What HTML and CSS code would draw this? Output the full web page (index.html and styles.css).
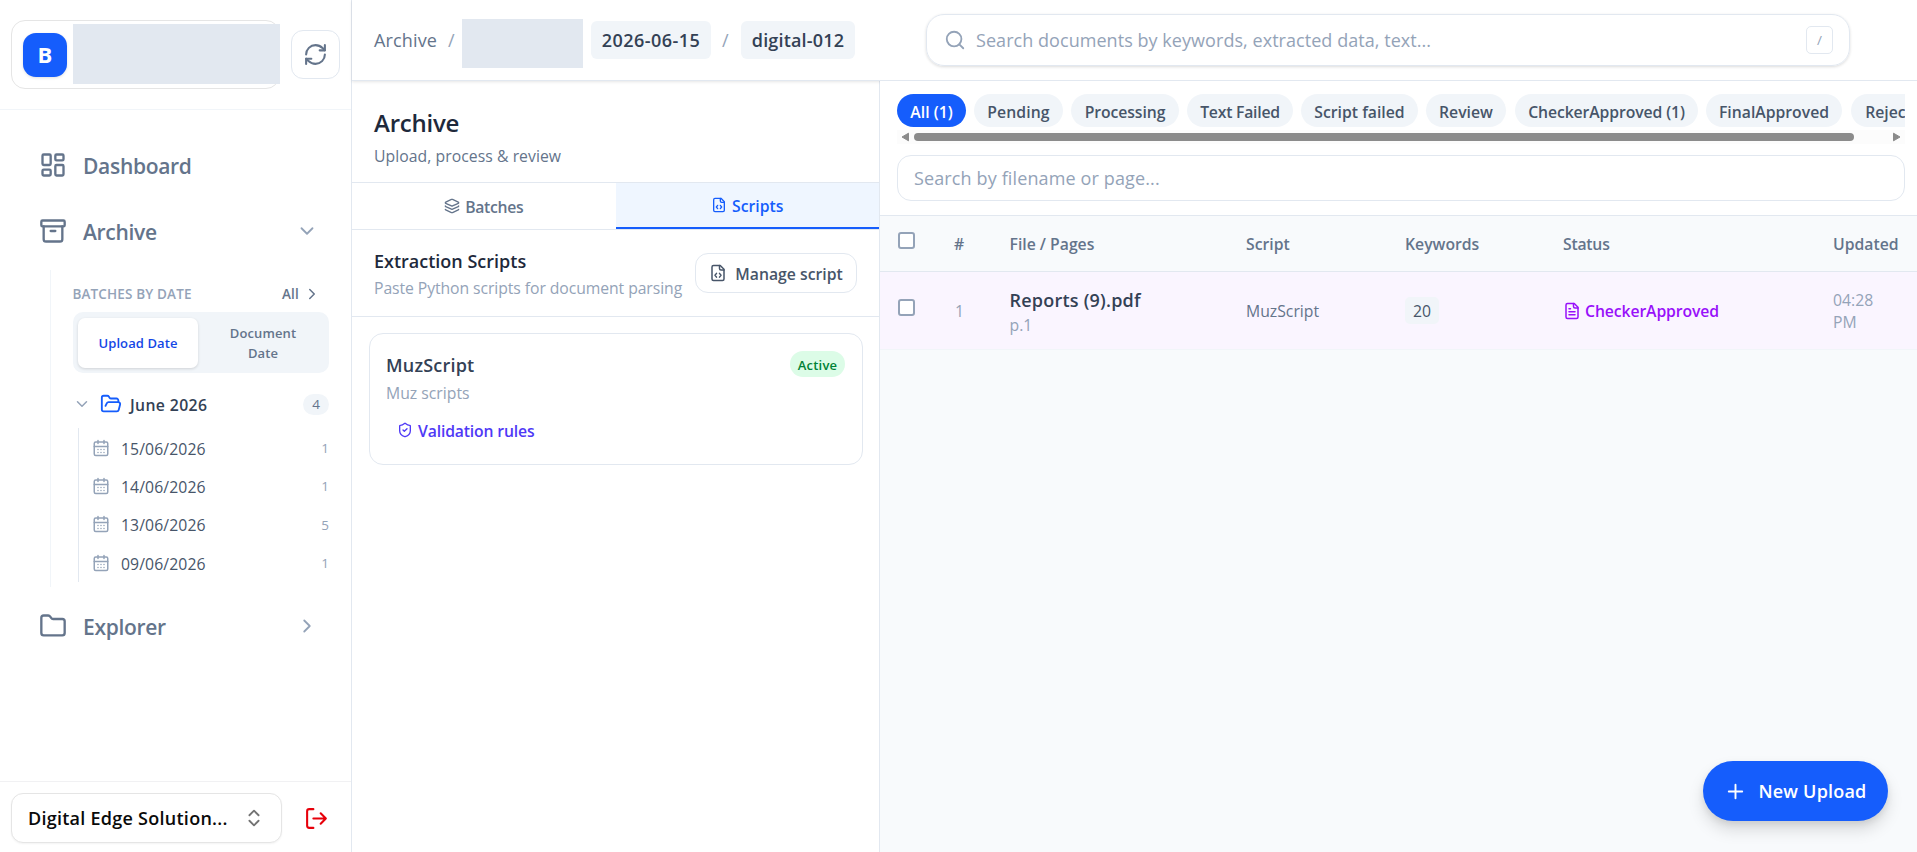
FILE: index.html
```html
<!DOCTYPE html>
<html lang="en">
<head>
<meta charset="utf-8">
<title>Archive</title>
<link rel="stylesheet" href="styles.css">
</head>
<body>
<svg class="defs" aria-hidden="true">
  <symbol id="down" viewBox="0 0 24 24"><path d="m6 9 6 6 6-6"/></symbol>
  <symbol id="right" viewBox="0 0 24 24"><path d="m9 18 6-6-6-6"/></symbol>
  <symbol id="cal" viewBox="0 0 24 24"><path d="M8 2v4M16 2v4"/><rect width="18" height="18" x="3" y="4" rx="2"/><path d="M3 10h18M8 14h.01M12 14h.01M16 14h.01M8 18h.01M12 18h.01M16 18h.01"/></symbol>
  <symbol id="code" viewBox="0 0 24 24"><path d="M15 2H6a2 2 0 0 0-2 2v16a2 2 0 0 0 2 2h12a2 2 0 0 0 2-2V7Z"/><path d="M14 2v4a2 2 0 0 0 2 2h4"/><path d="m10 12.5-2 2.5 2 2.5M14 12.5l2 2.5-2 2.5"/></symbol>
</svg>
<div class="app">
  <aside class="sidebar">
    <div class="brand-bar">
      <div class="brand"><span class="logo">B</span><span class="brand-mask"></span></div>
      <button class="refresh"><svg class="i i25" viewBox="0 0 24 24"><path d="M3 12a9 9 0 0 1 9-9 9.75 9.75 0 0 1 6.74 2.74L21 8"/><path d="M21 3v5h-5"/><path d="M21 12a9 9 0 0 1-9 9 9.75 9.75 0 0 1-6.74-2.74L3 16"/><path d="M8 16H3v5"/></svg></button>
    </div>
    <nav class="nav">
      <a class="nav-item"><svg class="i i28" viewBox="0 0 24 24"><rect width="7" height="9" x="3" y="3" rx="1"/><rect width="7" height="5" x="14" y="3" rx="1"/><rect width="7" height="9" x="14" y="12" rx="1"/><rect width="7" height="5" x="3" y="16" rx="1"/></svg><span class="t t-nav">Dashboard</span></a>
      <a class="nav-item"><svg class="i i28" viewBox="0 0 24 24"><rect width="20" height="5" x="2" y="3" rx="1"/><path d="M4 8v11a2 2 0 0 0 2 2h12a2 2 0 0 0 2-2V8"/><path d="M10 12h4"/></svg><span class="t t-nav">Archive</span><svg class="i i22 caret"><use href="#down"/></svg></a>
      <div class="sub">
        <div class="sub-head"><span class="t t-cap">BATCHES BY DATE</span><span class="all"><span class="t t-all">All</span><svg class="i i18"><use href="#right"/></svg></span></div>
        <div class="toggle"><span class="tg on"><span class="t">Upload Date</span></span><span class="tg"><span class="t">Document</span><span class="t">Date</span></span></div>
        <div class="month"><svg class="i i18 faint"><use href="#down"/></svg><svg class="i i22 folder" viewBox="0 0 24 24"><path d="m6 14 1.5-2.9A2 2 0 0 1 9.24 10H20a2 2 0 0 1 1.94 2.5l-1.54 6a2 2 0 0 1-1.95 1.5H4a2 2 0 0 1-2-2V5a2 2 0 0 1 2-2h3.9a2 2 0 0 1 1.69.9l.81 1.2a2 2 0 0 0 1.67.9H18a2 2 0 0 1 2 2v2"/></svg><span class="t t-month">June 2026</span><span class="count">4</span></div>
        <div class="days">
          <div class="day"><svg class="i i18"><use href="#cal"/></svg><span class="t t-day">15/06/2026</span><b>1</b></div>
          <div class="day"><svg class="i i18"><use href="#cal"/></svg><span class="t t-day">14/06/2026</span><b>1</b></div>
          <div class="day"><svg class="i i18"><use href="#cal"/></svg><span class="t t-day">13/06/2026</span><b>5</b></div>
          <div class="day"><svg class="i i18"><use href="#cal"/></svg><span class="t t-day">09/06/2026</span><b>1</b></div>
        </div>
      </div>
      <a class="nav-item"><svg class="i i28" viewBox="0 0 24 24"><path d="M20 20a2 2 0 0 0 2-2V8a2 2 0 0 0-2-2h-7.9a2 2 0 0 1-1.69-.9L9.6 3.9A2 2 0 0 0 7.93 3H4a2 2 0 0 0-2 2v13a2 2 0 0 0 2 2Z"/></svg><span class="t t-nav">Explorer</span><svg class="i i22 caret"><use href="#right"/></svg></a>
    </nav>
    <div class="account">
      <button class="org"><span class="t t-org">Digital Edge Solution...</span><svg class="i i22" viewBox="0 0 24 24"><path d="m7 15 5 5 5-5M7 9l5-5 5 5"/></svg></button>
      <svg class="i i25 logout" viewBox="0 0 24 24"><path d="m16 17 5-5-5-5M21 12H9M9 21H5a2 2 0 0 1-2-2V5a2 2 0 0 1 2-2h4"/></svg>
    </div>
  </aside>
  <div class="main">
    <header class="topbar">
      <div class="crumbs"><span class="t t-crumb">Archive</span><i>/</i><span class="crumb-mask"></span><span class="chip c1"><span class="t">2026-06-15</span></span><i>/</i><span class="chip c2"><span class="t">digital-012</span></span></div>
      <div class="search"><svg class="i i22" viewBox="0 0 24 24"><circle cx="11" cy="11" r="8"/><path d="m21 21-4.3-4.3"/></svg><span class="t">Search documents by keywords, extracted data, text...</span><kbd>/</kbd></div>
    </header>
    <div class="content">
      <section class="panel">
        <div class="panel-head"><h1 class="t-h1">Archive</h1><p class="t-sub">Upload, process &amp; review</p></div>
        <div class="tabs">
          <a class="tab"><svg class="i i16" viewBox="0 0 24 24"><path d="M12.83 2.18a2 2 0 0 0-1.66 0L2.6 6.08a1 1 0 0 0 0 1.83l8.58 3.91a2 2 0 0 0 1.66 0l8.58-3.9a1 1 0 0 0 0-1.83z"/><path d="M2 12a1 1 0 0 0 .58.91l8.6 3.91a2 2 0 0 0 1.65 0l8.58-3.9A1 1 0 0 0 22 12M2 17a1 1 0 0 0 .58.91l8.6 3.91a2 2 0 0 0 1.65 0l8.58-3.9A1 1 0 0 0 22 17"/></svg><span class="t t-tab">Batches</span></a>
          <a class="tab active"><svg class="i i16"><use href="#code"/></svg><span class="t">Scripts</span></a>
        </div>
        <div class="scripts-head"><div class="sh"><h2 class="t-h2">Extraction Scripts</h2><p class="t-p">Paste Python scripts for document parsing</p></div><button class="manage"><svg class="i i18"><use href="#code"/></svg><span class="t">Manage script</span></button></div>
        <article class="card">
          <div class="card-top"><h3 class="t-h3">MuzScript</h3><span class="active-badge">Active</span></div>
          <p class="t-p2">Muz scripts</p>
          <a class="rules"><svg class="i i16" viewBox="0 0 24 24"><path d="M20 13c0 5-3.5 7.5-7.66 8.95a1 1 0 0 1-.67-.01C7.5 20.5 4 18 4 13V6a1 1 0 0 1 1-1c2 0 4.5-1.2 6.24-2.72a1.17 1.17 0 0 1 1.52 0C14.51 3.81 17 5 19 5a1 1 0 0 1 1 1z"/><path d="m9 12 2 2 4-4"/></svg><span class="t t-rules">Validation rules</span></a>
        </article>
      </section>
      <section class="files">
        <div class="filters">
          <div class="pills">
            <span class="pill p1">All (1)</span><span class="pill p2">Pending</span><span class="pill p3">Processing</span><span class="pill p4">Text Failed</span><span class="pill p5">Script failed</span><span class="pill p6">Review</span><span class="pill p7">CheckerApproved (1)</span><span class="pill p8">FinalApproved</span><span class="pill p9">Rejected</span>
          </div>
          <div class="scroll"><svg viewBox="0 0 8 10"><path d="M7.5 1.2v7.6L1 5z"/></svg><span class="thumb"></span><svg viewBox="0 0 8 10"><path d="M.5 1.2v7.6L7 5z"/></svg></div>
          <div class="file-search">Search by filename or page...</div>
        </div>
        <div class="row head"><span class="box"></span><span class="t">#</span><span class="t">File / Pages</span><span class="t">Script</span><span class="t">Keywords</span><span class="t t-sth">Status</span><span class="t">Updated</span></div>
        <div class="row item"><span class="box"></span><span class="num">1</span><span class="file"><span class="t t-file">Reports (9).pdf</span><span class="page">p.1</span></span><span class="t t-cell">MuzScript</span><span><span class="kw">20</span></span><span class="status"><svg class="i i18" viewBox="0 0 24 24"><path d="M15 2H6a2 2 0 0 0-2 2v16a2 2 0 0 0 2 2h12a2 2 0 0 0 2-2V7Z"/><path d="M14 2v4a2 2 0 0 0 2 2h4M10 9H8M16 13H8M16 17H8"/></svg><span class="t">CheckerApproved</span></span><span class="time"><span>04:28</span><span>PM</span></span></div>
        <button class="upload"><svg class="i i23" viewBox="0 0 24 24"><path d="M5 12h14M12 5v14"/></svg><span class="t">New Upload</span></button>
      </section>
    </div>
  </div>
</div>
</body>
</html>
```

FILE: styles.css
```css
* { box-sizing: border-box; }
body { margin: 0; font-family: "Open Sans", "Noto Sans", sans-serif; font-size: 15.75px; color: #334155; background: #fff; overflow: hidden; }
h1, h2, h3, p { margin: 0; font-weight: inherit; font-size: inherit; }
button { font: inherit; background: #fff; padding: 0; border: 0; }
.defs { display: none; }
.t { white-space: nowrap; display: inline-block; }
.i { fill: none; stroke: currentColor; stroke-width: 2; stroke-linecap: round; stroke-linejoin: round; flex: none; display: block; }
.i16 { width: 16px; height: 16px; }
.i18 { width: 18px; height: 18px; }
.i22 { width: 22px; height: 22px; }
.i23 { width: 23px; height: 23px; }
.i25 { width: 25px; height: 25px; }
.i28 { width: 28px; height: 28px; }

.app { display: flex; height: 852px; width: 1917px; }

/* Sidebar */
.sidebar { width: 352px; flex: none; border-right: 1px solid #e2e8f0; display: flex; flex-direction: column; }
.brand-bar { height: 110px; border-bottom: 1px solid #f1f5f9; padding: 20px 11px 0; display: flex; gap: 11px; align-items: flex-start; }
.brand { width: 269px; height: 69px; border: 1px solid #e5e5e5; border-radius: 14px; padding: 3px 0 0 11px; display: flex; gap: 6px; flex: none; }
.logo { width: 44px; height: 44px; margin-top: 9px; border-radius: 13px; background: #155dfc; color: #fff; font-weight: 700; font-size: 22px; line-height: 43px; text-align: center; box-shadow: 0 1px 3px rgba(0,0,0,.12); flex: none; }
.brand-mask { width: 207px; height: 60px; background: #e2e8f0; flex: none; }
.refresh { width: 49px; height: 49px; margin-top: 10px; border: 1px solid #e2e8f0; border-radius: 12px; color: #64748b; display: grid; place-items: center; flex: none; }
.nav { flex: 1; padding-top: 22px; color: #64748b; }
.nav-item { height: 66px; display: flex; align-items: center; padding: 0 33px 0 39px; gap: 16px; }
.nav-item > .i:first-child { margin-top: -1px; }
.t-nav { font-size: 21px; font-weight: 600; letter-spacing: -.3px; padding-top: 1px; }
.caret { margin-left: auto; color: #94a3b8; }
.sub { height: 317px; margin: 6px 22px 6px 50px; border-left: 1px solid #f1f5f9; padding: 14px 0 0 22px; }
.sub-head { height: 20px; display: flex; align-items: center; justify-content: space-between; }
.t-cap { font-size: 13.5px; font-weight: 600; color: #94a3b8; letter-spacing: .14px; margin-left: -.5px; }
.all { display: flex; align-items: center; gap: 4px; margin-right: 8px; font-size: 13.5px; font-weight: 600; letter-spacing: .2px; }
.toggle { margin-top: 8px; height: 61px; width: 256px; background: #f1f5f9; border-radius: 10px; padding: 6px 5px 5px; display: flex; gap: 5px; }
.tg { width: 120px; height: 50px; display: flex; flex-direction: column; align-items: center; justify-content: center; font-size: 13px; line-height: 20px; font-weight: 600; letter-spacing: .1px; }
.tg.on { background: #fff; color: #1447e6; border-radius: 7px; box-shadow: 0 1px 3px rgba(0,0,0,.14); }
.month { height: 42px; margin-top: 10px; width: 256px; display: flex; align-items: center; }
.faint { color: #94a3b8; }
.folder { color: #155dfc; margin-left: 9px; }
.t-month { margin-left: 8px; padding-top: 1px; font-weight: 600; color: #334155; letter-spacing: .38px; }
.count { margin-left: auto; width: 26px; height: 21px; border-radius: 11px; background: #f1f5f9; font-size: 13.5px; line-height: 21px; text-align: center; }
.days { margin: 3px 0 0 5px; width: 251px; height: 154px; border-left: 1px solid #e2e8f0; padding: 1px 0 0 14px; }
.day { height: 38.3px; display: flex; align-items: center; color: #475569; }
.t-day { letter-spacing: .1px; padding-top: 1px; }
.day .i { color: #94a3b8; margin: -1px 10px 0 -1px; }
.day .t-day { margin-left: 1px; }
.day b { margin-left: auto; font-weight: 400; font-size: 13.5px; color: #94a3b8; }
.account { height: 71px; border-top: 1px solid #f1f1f3; padding: 11px 0 0 11px; display: flex; }
.org { width: 271px; height: 50px; border: 1px solid #e5e5e5; border-radius: 12px; display: flex; align-items: center; justify-content: space-between; padding: 0 16px; color: #737373; box-shadow: 0 1px 2px rgba(0,0,0,.05); }
.t-org { font-size: 18px; font-weight: 600; color: #0a0a0a; letter-spacing: .26px; }
.logout { color: #e7000b; margin: 13px 0 0 22px; }

/* Top bar */
.main { flex: 1; min-width: 0; display: flex; flex-direction: column; }
.topbar { height: 81px; border-bottom: 1px solid #e2e8f0; box-shadow: 0 1px 3px rgba(0,0,0,.1); position: relative; display: flex; align-items: center; padding: 0 67px 0 22px; justify-content: space-between; flex: none; }
.crumbs { display: flex; align-items: center; font-size: 18px; color: #64748b; }
.t-crumb { letter-spacing: .15px; width: 63px; }
.crumbs i { font-style: normal; color: #94a3b8; width: 8px; margin: 0 11px; }
.crumb-mask { width: 121px; height: 49px; background: #e2e8f0; margin: 6px 8px 0 -5px; }
.chip { height: 38px; background: #f1f5f9; border-radius: 6px; color: #334155; font-weight: 600; font-size: 18px; line-height: 38px; text-align: center; }
.c1 { width: 120px; letter-spacing: .45px; }
.c2 { width: 114px; letter-spacing: .18px; }
.search { width: 924px; height: 52px; border: 1px solid #e2e8f0; border-radius: 18px; box-shadow: 0 1px 3px rgba(0,0,0,.14); display: flex; align-items: center; padding: 0 16px 0 17px; color: #94a3b8; font-size: 18px; letter-spacing: .05px; }
.search .t { margin-left: 10px; }
kbd { margin-left: auto; width: 27px; height: 28px; border: 1px solid #e2e8f0; border-radius: 5px; font: 13.5px/26px "Open Sans", sans-serif; text-align: center; }

/* Scripts panel */
.content { flex: 1; display: flex; min-height: 0; }
.panel { width: 528px; border-right: 1px solid #e2e8f0; flex: none; white-space: nowrap; }
.panel-head { height: 102px; border-bottom: 1px solid #e2e8f0; padding: 24px 22px 0; }
.t-h1 { font-size: 24px; line-height: 36px; font-weight: 600; color: #1e293b; letter-spacing: -.23px; }
.t-sub { line-height: 24px; margin-top: 3px; color: #64748b; letter-spacing: .05px; }
.tabs { height: 47px; display: flex; border-bottom: 1px solid #e2e8f0; }
.tab { flex: 1; display: flex; align-items: center; justify-content: center; gap: 5px; color: #64748b; font-weight: 600; }
.t-tab { letter-spacing: -.3px; padding-top: 1px; }
.tab.active { background: #eff6ff; border-bottom: 2px solid #155dfc; color: #155dfc; }
.tab.active .t { padding-top: 1px; }
.scripts-head { height: 87px; border-bottom: 1px solid #e2e8f0; padding: 17px 22px 0; display: flex; justify-content: space-between; }
.t-h2 { font-size: 18px; line-height: 28px; font-weight: 600; color: #1e293b; }
.t-p { line-height: 27px; color: #94a3b8; letter-spacing: -.08px; }
.t-p2 { line-height: 28px; height: 26px; color: #94a3b8; }
.manage { width: 162px; height: 40px; margin-top: 6px; border: 1px solid #e2e8f0; border-radius: 13px; display: flex; align-items: center; gap: 8px; justify-content: center; color: #475569; font-weight: 600; flex: none; }
.manage .t { padding-top: 1px; }
.card { margin: 16px 16px 0 17px; height: 132px; border: 1px solid #e2e8f0; border-radius: 14px; padding: 17px 17px 17px 16px; }
.card-top { display: flex; justify-content: space-between; height: 28px; }
.t-h3 { font-size: 18px; line-height: 28px; font-weight: 600; color: #334155; letter-spacing: .2px; }
.active-badge { width: 55px; height: 26px; border-radius: 13px; background: #dcfce7; color: #008236; font-weight: 600; font-size: 13px; line-height: 28px; text-align: center; letter-spacing: .2px; }
.rules { display: flex; align-items: center; gap: 5px; margin: 10px 0 0 11px; height: 30px; color: #4f39f6; font-weight: 600; letter-spacing: -.15px; }
.rules .t { padding-top: 1px; }

/* Files */
.files { flex: 1; min-width: 0; background: #f8fafc; position: relative; }
.filters { height: 135px; background: #fff; border-bottom: 1px solid #e2e8f0; padding: 13px 12px 0 17px; }
.pills { height: 36px; display: flex; gap: 8px; overflow: hidden; white-space: nowrap; }
.pill { height: 33px; border-radius: 17px; background: #f1f5f9; color: #475569; font-weight: 600; line-height: 36px; text-align: center; flex: none; }
.p1 { width: 69px; background: #155dfc; color: #fff; }
.p2 { width: 89px; letter-spacing: .1px; }
.p3 { width: 108px; letter-spacing: -.08px; }
.p4 { width: 106px; letter-spacing: -.23px; }
.p5 { width: 117px; }
.p6 { width: 80px; }
.p7 { width: 183px; margin-left: 1px; letter-spacing: -.1px; }
.p8 { width: 136px; }
.p9 { width: 94px; margin-left: 1px; }
.scroll { height: 14px; background: #fcfcfc; display: flex; align-items: center; padding: 0 4px; }
.scroll svg { width: 8px; height: 10px; fill: #8b8b8b; stroke: #8b8b8b; stroke-linejoin: round; flex: none; }
.thumb { width: 940px; height: 8px; border-radius: 4px; background: #8b8b8b; margin: 0 auto 0 5px; }
.file-search { height: 46px; margin-top: 11px; border: 1px solid #e2e8f0; border-radius: 14px; padding: 0 16px; line-height: 44px; color: #94a3b8; font-size: 18px; letter-spacing: .13px; }
.row { display: grid; grid-template-columns: 56px 55.5px 236.5px 159px 158px 270px 1fr; align-items: center; padding-left: 18px; }
.head { height: 56px; border-bottom: 1px solid #e2e8f0; color: #64748b; font-weight: 600; }
.head .t { padding-top: 1px; }
.t-sth { letter-spacing: -.22px; }
.item { height: 78px; background: #faf5ff; border-bottom: 1px solid #f1f5f9; }
.box { width: 17px; height: 17px; border: 2px solid #94a3b8; border-radius: 3px; background: #fff; margin-top: -7px; }
.num { color: #94a3b8; padding-left: 1px; }
.file { display: flex; flex-direction: column; align-items: flex-start; }
.t-file { font-size: 18px; line-height: 26px; font-weight: 600; color: #334155; letter-spacing: .22px; }
.page { line-height: 24px; height: 22px; color: #94a3b8; }
.t-cell { color: #64748b; }
.kw { display: block; width: 34px; height: 27px; border-radius: 5px; background: #f1f5f9; color: #475569; line-height: 28px; text-align: center; }
.status { display: flex; align-items: center; gap: 4px; color: #9810fa; font-weight: 600; letter-spacing: -.1px; }
.time { display: flex; flex-direction: column; line-height: 22px; color: #94a3b8; }
.upload { position: absolute; right: 29px; bottom: 31px; width: 185px; height: 60px; border-radius: 30px; background: #155dfc; color: #fff; display: flex; align-items: center; justify-content: center; gap: 11px; font-size: 18px; font-weight: 600; letter-spacing: .2px; box-shadow: 0 9px 16px rgba(0,0,0,.13), 0 3px 6px rgba(0,0,0,.08); }
```
